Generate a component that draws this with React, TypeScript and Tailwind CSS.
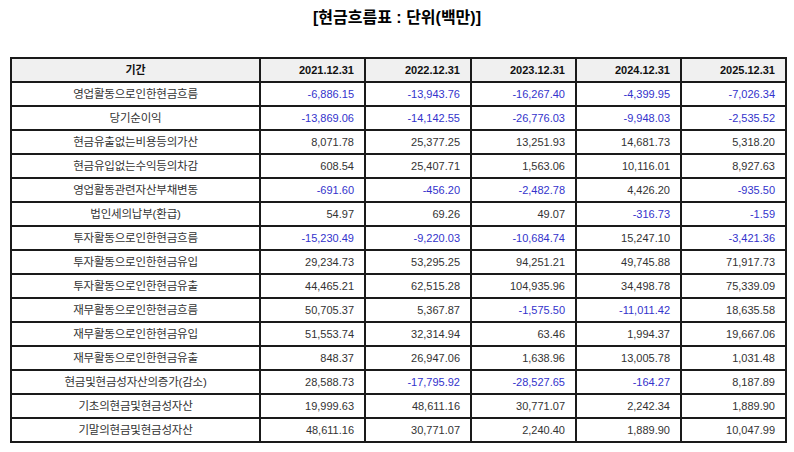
const YEARS = ["2021.12.31", "2022.12.31", "2023.12.31", "2024.12.31", "2025.12.31"];

const ROWS: [string, string[]][] = [
  ["영업활동으로인한현금흐름", ["-6,886.15", "-13,943.76", "-16,267.40", "-4,399.95", "-7,026.34"]],
  ["당기순이익", ["-13,869.06", "-14,142.55", "-26,776.03", "-9,948.03", "-2,535.52"]],
  ["현금유출없는비용등의가산", ["8,071.78", "25,377.25", "13,251.93", "14,681.73", "5,318.20"]],
  ["현금유입없는수익등의차감", ["608.54", "25,407.71", "1,563.06", "10,116.01", "8,927.63"]],
  ["영업활동관련자산부채변동", ["-691.60", "-456.20", "-2,482.78", "4,426.20", "-935.50"]],
  ["법인세의납부(환급)", ["54.97", "69.26", "49.07", "-316.73", "-1.59"]],
  ["투자활동으로인한현금흐름", ["-15,230.49", "-9,220.03", "-10,684.74", "15,247.10", "-3,421.36"]],
  ["투자활동으로인한현금유입", ["29,234.73", "53,295.25", "94,251.21", "49,745.88", "71,917.73"]],
  ["투자활동으로인한현금유출", ["44,465.21", "62,515.28", "104,935.96", "34,498.78", "75,339.09"]],
  ["재무활동으로인한현금흐름", ["50,705.37", "5,367.87", "-1,575.50", "-11,011.42", "18,635.58"]],
  ["재무활동으로인한현금유입", ["51,553.74", "32,314.94", "63.46", "1,994.37", "19,667.06"]],
  ["재무활동으로인한현금유출", ["848.37", "26,947.06", "1,638.96", "13,005.78", "1,031.48"]],
  ["현금및현금성자산의증가(감소)", ["28,588.73", "-17,795.92", "-28,527.65", "-164.27", "8,187.89"]],
  ["기초의현금및현금성자산", ["19,999.63", "48,611.16", "30,771.07", "2,242.34", "1,889.90"]],
  ["기말의현금및현금성자산", ["48,611.16", "30,771.07", "2,240.40", "1,889.90", "10,047.99"]],
];

const cell = "border-r-2 border-b-2 border-[#1a1a1a] h-[24px] p-0 leading-[22px]";

export default function App() {
  return (
    <div className="w-[794px] h-[452px] bg-white font-['Liberation_Sans','Noto_Sans_CJK_KR',sans-serif] text-[#333]">
      <h1 className="pt-[7px] h-[57px] text-center text-[16px] font-bold leading-[22px] text-black">
        [현금흐름표 : 단위(백만)]
      </h1>
      <table className="ml-[10px] table-fixed border-separate border-spacing-0 border-l-2 border-t-2 border-[#1a1a1a] text-[11px]">
        <colgroup>
          <col className="w-[249px]" />
          <col className="w-[105px]" />
          <col className="w-[106px]" />
          <col className="w-[105px]" />
          <col className="w-[105px]" />
          <col className="w-[105px]" />
        </colgroup>
        <thead>
          <tr className="bg-[#f0f0f0] font-bold text-[#111]">
            <th className={`${cell} text-center`}>기간</th>
            {YEARS.map((y) => (
              <th key={y} className={`${cell} text-right pr-[10px]`}>
                {y}
              </th>
            ))}
          </tr>
        </thead>
        <tbody>
          {ROWS.map(([label, values]) => (
            <tr key={label}>
              <td className={`${cell} text-center text-[11.5px] tracking-[-0.2px]`}>{label}</td>
              {values.map((v, i) => (
                <td
                  key={i}
                  className={`${cell} text-right pr-[10px] ${v.startsWith("-") ? "text-[#3333cc]" : ""}`}
                >
                  {v}
                </td>
              ))}
            </tr>
          ))}
        </tbody>
      </table>
    </div>
  );
}
